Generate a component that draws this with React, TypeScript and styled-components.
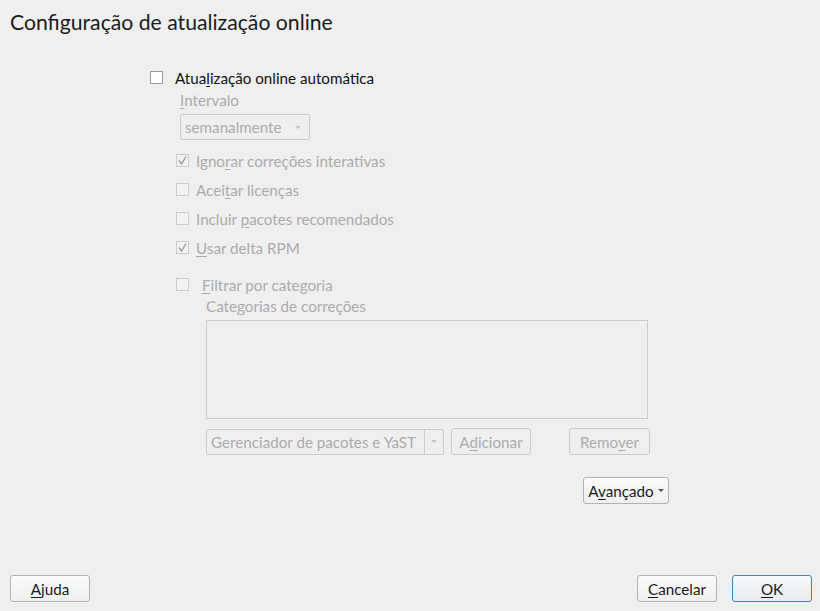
import React from "react";
import styled, { createGlobalStyle } from "styled-components";

const Global = createGlobalStyle`
  html, body { margin: 0; padding: 0; }
  body {
    background: #efefef;
    font-family: "Lato", "Noto Sans", sans-serif;
    color: #1e1e1e;
  }
  #root { height: 100vh; }
`;

const DIS = "#acacac";
const DIS_BORDER = "#cdcdcd";
const FS = "15.2px";

const Page = styled.div`
  height: 611px;
  display: flex;
  flex-direction: column;
  box-sizing: border-box;
  padding: 0 8px 9px 10px;
`;

const Title = styled.h1`
  margin: 8px 0 0 0;
  font-size: 21.2px;
  font-weight: 400;
  line-height: 28px;
  color: #1c1c1c;
`;

const Main = styled.div`
  flex: 1;
  display: flex;
  justify-content: center;
  padding-top: 33px;
  padding-right: 2px;
`;

const Panel = styled.div`
  width: 520px;
  display: flex;
  flex-direction: column;
`;

const CheckRow = styled.label<{ $indent?: number; $gap?: number; $disabled?: boolean }>`
  display: flex;
  align-items: center;
  gap: ${(p) => p.$gap ?? 7}px;
  margin-left: ${(p) => p.$indent ?? 0}px;
  height: 17px;
  font-size: ${FS};
  color: ${(p) => (p.$disabled ? DIS : "#111")};
`;

const Box = styled.span<{ $disabled?: boolean }>`
  width: 13px;
  height: 13px;
  box-sizing: border-box;
  border: 1px solid ${(p) => (p.$disabled ? DIS_BORDER : "#9a9a9a")};
  background: ${(p) => (p.$disabled ? "#f2f2f2" : "#fff")};
  display: flex;
  align-items: center;
  justify-content: center;
  flex: none;
`;

const Mn = styled.span`
  text-decoration: underline;
  text-underline-offset: 2px;
`;

const Field = styled.div<{ $indent: number }>`
  margin-left: ${(p) => p.$indent}px;
  display: flex;
  flex-direction: column;
  align-items: flex-start;
`;

const FieldLabel = styled.div`
  font-size: ${FS};
  line-height: 17px;
  color: ${DIS};
`;

const Combo = styled.div<{ $width: number }>`
  width: ${(p) => p.$width}px;
  height: 26px;
  box-sizing: border-box;
  border: 1px solid ${DIS_BORDER};
  border-radius: 2px;
  background: #efefef;
  display: flex;
  align-items: center;
  font-size: ${FS};
  color: ${DIS};
`;

const ComboText = styled.span`
  flex: 1;
  padding-left: 4px;
  white-space: nowrap;
`;

const Arrow = styled.span<{ $sep?: boolean; $dark?: boolean }>`
  width: ${(p) => (p.$sep ? 18 : 22)}px;
  align-self: stretch;
  display: flex;
  align-items: center;
  justify-content: center;
  border-left: ${(p) => (p.$sep ? `1px solid ${DIS_BORDER}` : "none")};
  &::after {
    content: "";
    border-left: 3px solid transparent;
    border-right: 3px solid transparent;
    border-top: 3px solid ${(p) => (p.$dark ? "#555" : "#c4c4c4")};
  }
`;

const Checks = styled.div`
  display: flex;
  flex-direction: column;
  gap: 12px;
  margin-top: 12px;
`;

const ListBox = styled.div`
  margin-top: 5px;
  width: 442px;
  height: 99px;
  box-sizing: border-box;
  border: 1px solid ${DIS_BORDER};
  background: #efefef;
`;

const ButtonRow = styled.div`
  margin-top: 9px;
  width: 444px;
  display: flex;
  align-items: center;
`;

const Button = styled.button<{ $disabled?: boolean; $default?: boolean; $width?: number }>`
  width: ${(p) => p.$width ?? 80}px;
  height: 27px;
  box-sizing: border-box;
  padding: 0 4px;
  font-family: inherit;
  font-size: ${FS};
  border-radius: 3px;
  display: inline-flex;
  align-items: center;
  justify-content: center;
  gap: 4px;
  color: ${(p) => (p.$disabled ? DIS : "#1a1a1a")};
  border: 1px solid ${(p) => (p.$default ? "#3a84b8" : p.$disabled ? DIS_BORDER : "#b3b3b3")};
  background: ${(p) =>
    p.$disabled
      ? "#efefef"
      : p.$default
      ? "linear-gradient(#f6f8fa, #e8ecef)"
      : "linear-gradient(#fbfbfb, #efefef)"};
`;

const Spacer = styled.div`
  flex: 1;
`;

const Footer = styled.div`
  display: flex;
  align-items: center;
  gap: 15px;
`;

const Check = () => (
  <svg width="11" height="11" viewBox="0 0 11 11">
    <path d="M2 5.5 L4.5 9 L9 1.5" fill="none" stroke="#9a9a9a" strokeWidth="1.3" />
  </svg>
);

const CB = ({ checked, disabled }: { checked?: boolean; disabled?: boolean }) => (
  <Box $disabled={disabled}>{checked && <Check />}</Box>
);

export default function App() {
  return (
    <>
      <Global />
      <Page>
        <Title>Configuração de atualização online</Title>
        <Main>
          <Panel>
            <CheckRow $gap={12}>
              <CB />
              <span>
                Atua<Mn>l</Mn>ização online automática
              </span>
            </CheckRow>
            <Field $indent={30} style={{ marginTop: 6 }}>
              <FieldLabel>
                <Mn>I</Mn>ntervalo
              </FieldLabel>
              <Combo $width={130} style={{ marginTop: 5 }}>
                <ComboText>semanalmente</ComboText>
                <Arrow />
              </Combo>
            </Field>
            <Checks>
              <CheckRow $indent={26} $disabled>
                <CB checked disabled />
                <span>
                  Igno<Mn>r</Mn>ar correções interativas
                </span>
              </CheckRow>
              <CheckRow $indent={26} $disabled>
                <CB disabled />
                <span>
                  Acei<Mn>t</Mn>ar licenças
                </span>
              </CheckRow>
              <CheckRow $indent={26} $disabled>
                <CB disabled />
                <span>
                  Incluir <Mn>p</Mn>acotes recomendados
                </span>
              </CheckRow>
              <CheckRow $indent={26} $disabled>
                <CB checked disabled />
                <span>
                  <Mn>U</Mn>sar delta RPM
                </span>
              </CheckRow>
              <CheckRow $indent={26} $gap={13} $disabled style={{ marginTop: 8 }}>
                <CB disabled />
                <span>
                  <Mn>F</Mn>iltrar por categoria
                </span>
              </CheckRow>
            </Checks>
            <Field $indent={56} style={{ marginTop: 5 }}>
              <FieldLabel>
                Cate<Mn>g</Mn>orias de correções
              </FieldLabel>
              <ListBox />
              <ButtonRow>
                <Combo $width={238}>
                  <ComboText>Gerenciador de pacotes e YaST</ComboText>
                  <Arrow $sep />
                </Combo>
                <Button $disabled style={{ marginLeft: 7 }}>
                  <span>
                    A<Mn>d</Mn>icionar
                  </span>
                </Button>
                <Spacer />
                <Button $disabled $width={81}>
                  <span>
                    Remo<Mn>v</Mn>er
                  </span>
                </Button>
              </ButtonRow>
            </Field>
            <ButtonRow style={{ width: "auto", marginTop: 22, paddingRight: 1 }}>
              <Spacer />
              <Button $width={86}>
                <span>
                  A<Mn>v</Mn>ançado
                </span>
                <Arrow $dark style={{ width: 6 }} />
              </Button>
            </ButtonRow>
          </Panel>
        </Main>
        <Footer>
          <Button>
            <span>
              <Mn>A</Mn>juda
            </span>
          </Button>
          <Spacer />
          <Button>
            <span>
              <Mn>C</Mn>ancelar
            </span>
          </Button>
          <Button $default>
            <span>
              <Mn>O</Mn>K
            </span>
          </Button>
        </Footer>
      </Page>
    </>
  );
}
